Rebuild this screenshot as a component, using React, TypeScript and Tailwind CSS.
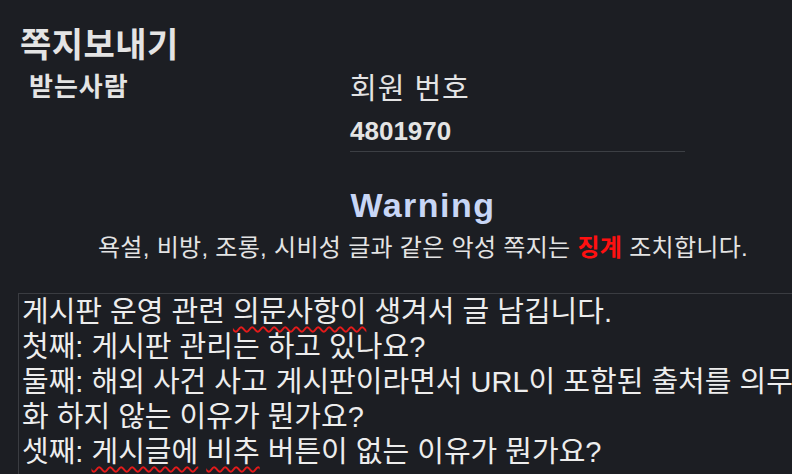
import React from "react";

const font = { fontFamily: '"Liberation Sans", "Noto Sans CJK KR", sans-serif' };

const wavy =
  "underline decoration-wavy decoration-[#e41a1a] decoration-[1.5px] underline-offset-[4px]";

export default function App() {
  return (
    <div className="min-h-screen w-full overflow-hidden bg-[#1c1e23] text-[#e4e4e4]" style={font}>
      <div className="ml-[18px] w-[810px] pt-[23px]">
        <h1 className="pl-[2px] text-[34px] font-bold leading-[44px] tracking-[0.5px]">쪽지보내기</h1>
        <div className="mt-[2px] flex">
          <div className="w-[332px] pl-[11px] text-[26px] font-bold leading-[36px] tracking-[1px]">받는사람</div>
          <div className="w-[335px]">
            <div className="text-[29px] leading-[40px] tracking-[1px]">회원 번호</div>
            <div className="mt-[4px] text-[26px] font-bold leading-[36px]">4801970</div>
            <div className="mt-[2px] h-px bg-[#3c3f44]" />
          </div>
        </div>
        <div className="mt-[33px] text-center">
          <div className="text-[34px] font-bold leading-[40px] tracking-[1.5px] text-[#c8d6f6]">Warning</div>
          <div className="mt-[7px] text-[24px] leading-[32px] tracking-[0.3px]">
            욕설, 비방, 조롱, 시비성 글과 같은 악성 쪽지는{" "}
            <span className="font-bold text-[#ff1010]">징계</span> 조치합니다.
          </div>
        </div>
        <div className="mt-[29px] h-[200px] whitespace-pre border-l border-t border-[#3a3c41] pl-[3px] pt-[1px] text-[29px] leading-[35px] text-[#ededed]">
          <div>
            게시판 운영 관련 <span className={wavy}>의문사항이</span> 생겨서 글 남깁니다.
          </div>
          <div>첫째: 게시판 관리는 하고 있나요?</div>
          <div>둘째: 해외 사건 사고 게시판이라면서 URL이 포함된 출처를 의무</div>
          <div>화 하지 않는 이유가 뭔가요?</div>
          <div>
            셋째: <span className={wavy}>게시글에</span> <span className={wavy}>비추</span> 버튼이 없는 이유가 뭔가요?
          </div>
        </div>
      </div>
    </div>
  );
}
